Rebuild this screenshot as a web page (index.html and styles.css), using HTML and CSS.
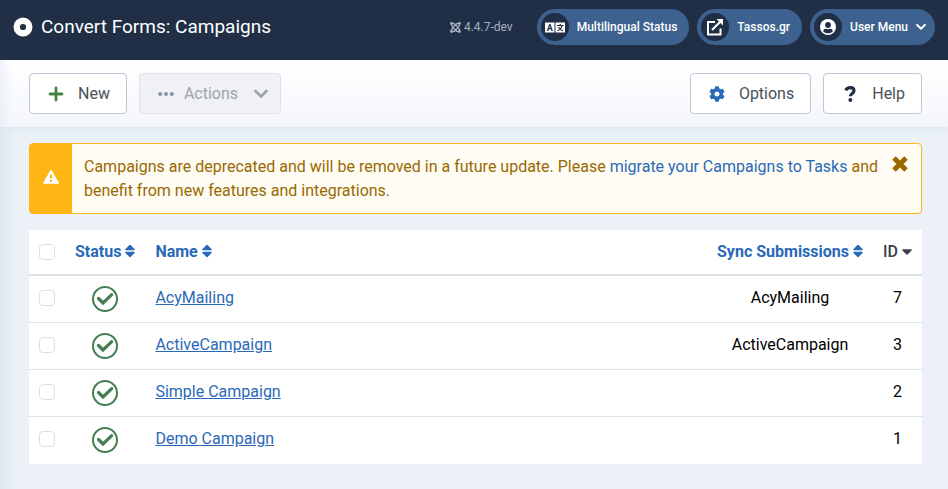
FILE: index.html
```html
<!DOCTYPE html>
<html lang="en">
<head>
  <meta charset="UTF-8" />
  <meta name="viewport" content="width=device-width, initial-scale=1.0"/>
  <title>Convert Forms: Campaigns</title>
  <link rel="stylesheet" href="styles.css">
</head>
<body>

  <!-- SHARED ICONS -->
  <svg class="sprite" aria-hidden="true">
    <symbol id="icon-sort" viewBox="0 0 10 14">
      <path d="M5 1.500L9 5.500H1zM5 12.500L1 8.500H9z" fill="currentColor" stroke="currentColor" stroke-width="1.500" stroke-linejoin="round"/>
    </symbol>
    <symbol id="icon-check" viewBox="0 0 26 26">
      <circle cx="13" cy="13" r="12" fill="none" stroke="currentColor" stroke-width="2"/>
      <path d="M6.500 12.500L11 17L19.700 8.700" fill="none" stroke="currentColor" stroke-width="3.200" stroke-linecap="round"/>
    </symbol>
    <symbol id="icon-chevron" viewBox="0 0 14 10">
      <path d="M1.500 2L7 7.500L12.500 2" fill="none" stroke="currentColor" stroke-width="2.800" stroke-linecap="round" stroke-linejoin="round"/>
    </symbol>
  </svg>

  <header class="header">
    <h1 class="page-title">
      <svg width="20" height="20" viewBox="0 0 20 20"><circle cx="10" cy="10" r="6.300" fill="none" stroke="currentColor" stroke-width="6.400"/></svg>
      Convert Forms: Campaigns
    </h1>
    <div class="header-items">
      <div class="version">
        <svg width="11" height="11" viewBox="0 0 22 22" fill="none" stroke="currentColor" stroke-width="2.600">
          <path d="M3 4C2 9 5 10 14 19M19 4C20 9 17 10 8 19M3 18C2 13 5 12 14 3M19 18C20 13 17 12 8 3M4 3C8 2 9 4 11 6M18 3C14 2 13 4 11 6M4 19C8 20 9 18 11 16M18 19C14 20 13 18 11 16"/>
          <g fill="currentColor" stroke="none"><circle cx="3" cy="3" r="2.800"/><circle cx="19" cy="3" r="2.800"/><circle cx="3" cy="19" r="2.800"/><circle cx="19" cy="19" r="2.800"/></g>
        </svg>
        4.4.7-dev
      </div>
      <a class="pill" href="#">
        <span class="pill-icon">
          <svg width="20" height="11" viewBox="0 0 20 11">
            <path d="M0 .5H9.500V10.500H0zM10.500 .5H20V10.500H10.500z" fill="#fff"/>
            <path d="M12 3.500H18.500M15.200 2V3.500M17 3.500C16.500 6 14.500 8 12.500 8.800M13.500 5C14.500 7 16 8.200 18 8.800" fill="none" stroke="#202f46" stroke-width="1.200"/>
            <text class="lang-letter" x="4.800" y="8.700" text-anchor="middle">A</text>
          </svg>
        </span>
        Multilingual Status
      </a>
      <a class="pill" href="#">
        <span class="pill-icon">
          <svg width="18" height="18" viewBox="0 0 18 18" fill="none" stroke="#fff" stroke-width="2">
            <path d="M9 4H2V16.500H14.500V10.500M6 12L15 3"/>
            <path d="M10.500 1H17V7.500z" fill="#fff" stroke="none"/>
          </svg>
        </span>
        Tassos.gr
      </a>
      <button type="button" class="pill pill-menu">
        <span class="pill-icon">
          <svg width="16" height="16" viewBox="0 0 16 16">
            <circle cx="8" cy="8" r="8" fill="#fff"/>
            <circle cx="8" cy="6" r="2.900" fill="#202f46"/>
            <path d="M3.200 12.200C3.200 10.500 4.500 9.700 5.800 9.700C7 10.300 9 10.300 10.200 9.700C11.500 9.700 12.800 10.500 12.800 12.200C10.500 15 5.500 15 3.200 12.200z" fill="#202f46"/>
          </svg>
        </span>
        User Menu
        <svg width="10" height="8"><use href="#icon-chevron"/></svg>
      </button>
    </div>
  </header>

  <div class="toolbar">
    <button type="button" class="btn">
      <svg class="icon-new" width="16" height="16" viewBox="0 0 16 16"><path d="M8 2V14M2 8H14" stroke="currentColor" stroke-width="2.800" stroke-linecap="round"/></svg>
      New
    </button>
    <button type="button" class="btn btn-actions" disabled>
      <svg class="icon-dots" width="16" height="16" viewBox="0 0 16 16" fill="currentColor"><circle cx="2.200" cy="8" r="2.100"/><circle cx="8" cy="8" r="2.100"/><circle cx="13.800" cy="8" r="2.100"/></svg>
      Actions
      <svg class="icon-caret" width="14" height="10"><use href="#icon-chevron"/></svg>
    </button>
    <button type="button" class="btn btn-options">
      <svg class="icon-options" width="16" height="16" viewBox="0 0 512 512" fill="currentColor"><path d="M487.4 315.7l-42.6-24.6c4.3-23.2 4.3-47 0-70.2l42.6-24.6c4.9-2.8 7.1-8.6 5.5-14-11.1-35.6-30-67.8-54.7-94.6-3.8-4.1-10-5.100-14.8-2.300L380.8 110c-17.9-15.4-38.500-27.300-60.8-35.100V25.800c0-5.600-3.900-10.500-9.400-11.700-36.700-8.200-74.300-7.800-109.200 0-5.500 1.200-9.400 6.100-9.400 11.700V75c-22.200 7.900-42.800 19.800-60.800 35.100L88.700 85.500c-4.900-2.800-11-1.900-14.800 2.300-24.700 26.700-43.600 58.900-54.700 94.600-1.700 5.400.6 11.200 5.500 14L67.300 221c-4.300 23.200-4.300 47 0 70.200l-42.600 24.600c-4.900 2.800-7.100 8.600-5.500 14 11.100 35.600 30 67.800 54.700 94.600 3.800 4.100 10 5.100 14.800 2.300l42.600-24.600c17.900 15.400 38.500 27.300 60.800 35.100v49.200c0 5.600 3.900 10.500 9.400 11.700 36.700 8.200 74.300 7.800 109.200 0 5.500-1.200 9.400-6.100 9.400-11.700v-49.200c22.200-7.900 42.800-19.800 60.800-35.100l42.600 24.600c4.900 2.800 11 1.900 14.800-2.300 24.700-26.700 43.600-58.900 54.700-94.600 1.500-5.500-.7-11.300-5.600-14.100zM256 336c-44.100 0-80-35.900-80-80s35.900-80 80-80 80 35.900 80 80-35.900 80-80 80z"/></svg>
      Options
    </button>
    <button type="button" class="btn">
      <svg class="icon-help" width="16" height="16" viewBox="0 0 16 16"><path d="M3.800 4.300C5.300 .9 12 .6 12 4.800C12 7.600 8.400 7.300 8.400 10.300" fill="none" stroke="currentColor" stroke-width="3.200"/><circle cx="8.400" cy="13.900" r="2" fill="currentColor"/></svg>
      Help
    </button>
  </div>

  <main class="content">
    <div class="alert" role="alert">
      <div class="alert-icon">
        <svg width="16" height="16" viewBox="0 0 16 16">
          <path d="M8 1.500L15.200 14H.8z" fill="#fff" stroke="#fff" stroke-width="1.500" stroke-linejoin="round"/>
          <path d="M8 5.500V9.500M8 11V13" stroke="#ffb514" stroke-width="2"/>
        </svg>
      </div>
      <p class="alert-message">Campaigns are deprecated and will be removed in a future update. Please <a href="#">migrate your Campaigns to Tasks</a> and benefit from new features and integrations.</p>
      <button type="button" class="alert-close" aria-label="Close">
        <svg width="16" height="16" viewBox="0 0 16 16"><path d="M2 2L14 14M14 2L2 14" stroke="currentColor" stroke-width="5"/></svg>
      </button>
    </div>

    <table class="campaigns">
      <thead>
        <tr>
          <th class="col-check"><input type="checkbox" aria-label="Check all items"></th>
          <th class="col-status"><a href="#">Status <svg width="10" height="14"><use href="#icon-sort"/></svg></a></th>
          <th class="col-name"><a href="#">Name <svg width="10" height="14"><use href="#icon-sort"/></svg></a></th>
          <th class="col-sync"><a href="#">Sync Submissions <svg width="10" height="14"><use href="#icon-sort"/></svg></a></th>
          <th class="col-id"><a class="sorted" href="#">ID <svg width="10" height="6" viewBox="0 0 10 6"><path d="M1 1H9L5 5z" fill="currentColor" stroke="currentColor" stroke-width="1.500" stroke-linejoin="round"/></svg></a></th>
        </tr>
      </thead>
      <tbody>
        <tr>
          <td><input type="checkbox" aria-label="Select AcyMailing"></td>
          <td class="col-status"><svg class="published" width="26" height="26"><use href="#icon-check"/></svg></td>
          <td><a href="#">AcyMailing</a></td>
          <td class="col-sync">AcyMailing</td>
          <td class="col-id">7</td>
        </tr>
        <tr>
          <td><input type="checkbox" aria-label="Select ActiveCampaign"></td>
          <td class="col-status"><svg class="published" width="26" height="26"><use href="#icon-check"/></svg></td>
          <td><a href="#">ActiveCampaign</a></td>
          <td class="col-sync">ActiveCampaign</td>
          <td class="col-id">3</td>
        </tr>
        <tr>
          <td><input type="checkbox" aria-label="Select Simple Campaign"></td>
          <td class="col-status"><svg class="published" width="26" height="26"><use href="#icon-check"/></svg></td>
          <td><a href="#">Simple Campaign</a></td>
          <td class="col-sync"></td>
          <td class="col-id">2</td>
        </tr>
        <tr>
          <td><input type="checkbox" aria-label="Select Demo Campaign"></td>
          <td class="col-status"><svg class="published" width="26" height="26"><use href="#icon-check"/></svg></td>
          <td><a href="#">Demo Campaign</a></td>
          <td class="col-sync"></td>
          <td class="col-id">1</td>
        </tr>
      </tbody>
    </table>
  </main>

</body>
</html>
```
FILE: styles.css
```css
* {
  box-sizing: border-box;
}

body {
  margin: 0;
  min-height: 100vh;
  background: linear-gradient(to right, #dfe7f4, #ebf1f6 16px);
  font-family: Roboto, "Liberation Sans", sans-serif;
  font-size: 16px;
  line-height: 24px;
  color: #000;
}

a {
  color: #2a69b8;
}

button {
  font: inherit;
  cursor: pointer;
}

svg {
  flex: none;
}

.sprite {
  display: none;
}

/* header */
.header {
  position: relative;
  z-index: 1;
  display: flex;
  align-items: center;
  justify-content: space-between;
  height: 60px;
  padding: 0 13px 6px;
  background: #202f46;
  color: #fff;
}

.page-title {
  display: flex;
  align-items: center;
  gap: 8px;
  margin: 0;
  font-size: 19px;
  font-weight: 400;
}

.header-items {
  display: flex;
  align-items: center;
  gap: 8px;
}

.version {
  display: flex;
  align-items: center;
  gap: 3px;
  margin-right: 16px;
  font-size: 12px;
  color: #a5b1c2;
}

.pill {
  display: flex;
  align-items: center;
  gap: 8px;
  height: 36px;
  padding: 0 12px 0 4px;
  border: 0;
  border-radius: 18px;
  background: #3e6290;
  color: #fff;
  font-size: 12px;
  font-weight: 500;
  text-decoration: none;
}

.pill-menu {
  padding-right: 9px;
}

.pill-icon {
  display: flex;
  align-items: center;
  justify-content: center;
  width: 28px;
  height: 28px;
  border-radius: 50%;
  background: #202f46;
}

.lang-letter {
  font-size: 9px;
  font-weight: 700;
  fill: #202f46;
}

/* toolbar */
.toolbar {
  display: flex;
  gap: 12px;
  padding: 13px 26px 13px 29px;
  background: linear-gradient(to right, rgba(223, 231, 244, 0.5), rgba(223, 231, 244, 0) 12px), linear-gradient(#fff, #f4f6fb);
  box-shadow: 0 2px 8px #dde5ee;
}

.btn {
  display: flex;
  align-items: center;
  gap: 14px;
  height: 41px;
  padding: 0 16px 0 18px;
  border: 1px solid #bfc8d6;
  border-radius: 4px;
  background: #fff;
  color: #495057;
}

.btn-actions {
  gap: 10px;
  padding: 0 12px 0 18px;
  border-color: #dee1e6;
  background: #eff1f4;
  color: #a0a4a9;
  cursor: default;
}

.btn-options {
  margin-left: auto;
}

.icon-new {
  color: #448344;
}

.icon-dots {
  color: #8b96a8;
}

.icon-caret {
  margin-left: 6px;
}

.icon-options {
  color: #2a69b8;
}

.icon-help {
  color: #202f46;
}

/* message */
.content {
  padding: 16px 26px 26px 29px;
}

.alert {
  display: flex;
  margin-bottom: 16px;
  border: 1px solid #ffb514;
  border-radius: 4px;
  background: #fffcf4;
  color: #996900;
}

.alert-icon {
  display: flex;
  align-items: center;
  justify-content: center;
  width: 42px;
  padding-bottom: 4px;
  background: #ffb514;
}

.alert-message {
  flex: 1;
  margin: 0;
  padding: 11px 12px 10px;
}

.alert-message a {
  text-decoration: none;
}

.alert-close {
  align-self: flex-start;
  display: flex;
  padding: 12px 13px 12px 0;
  border: 0;
  background: none;
  color: #996900;
}

/* campaigns table */
.campaigns {
  width: 100%;
  border-collapse: separate;
  border-spacing: 0;
  background: #fff;
}

.campaigns th,
.campaigns td {
  height: 47px;
  padding: 0 10px 2px;
  border-bottom: 1px solid #dee2e6;
  text-align: left;
  white-space: nowrap;
}

.campaigns th {
  height: 46px;
  padding-bottom: 0;
  border-bottom-width: 2px;
  font-weight: 700;
}

.campaigns th a {
  text-decoration: none;
}

.campaigns th svg {
  vertical-align: -1px;
}

.campaigns tbody tr:last-child td {
  border-bottom-color: transparent;
}

.campaigns input {
  display: block;
  appearance: none;
  width: 16px;
  height: 16px;
  margin: 0;
  border: 1px solid #dcdfe6;
  border-radius: 4px;
  background: #fff;
}

.campaigns input:checked {
  border-color: #2a69b8;
  background: #2a69b8;
}

.campaigns .col-check {
  width: 36px;
}

.campaigns .col-status {
  width: 80px;
  text-align: center;
}

.campaigns .col-sync {
  width: 166px;
  text-align: center;
}

.campaigns .col-id {
  width: 49px;
  text-align: center;
}

.campaigns th .sorted {
  color: #373f4a;
  font-weight: 500;
}

.campaigns th .sorted svg {
  vertical-align: 2px;
}

.published {
  display: block;
  margin: 2px auto 0;
  color: #457d54;
}
```
